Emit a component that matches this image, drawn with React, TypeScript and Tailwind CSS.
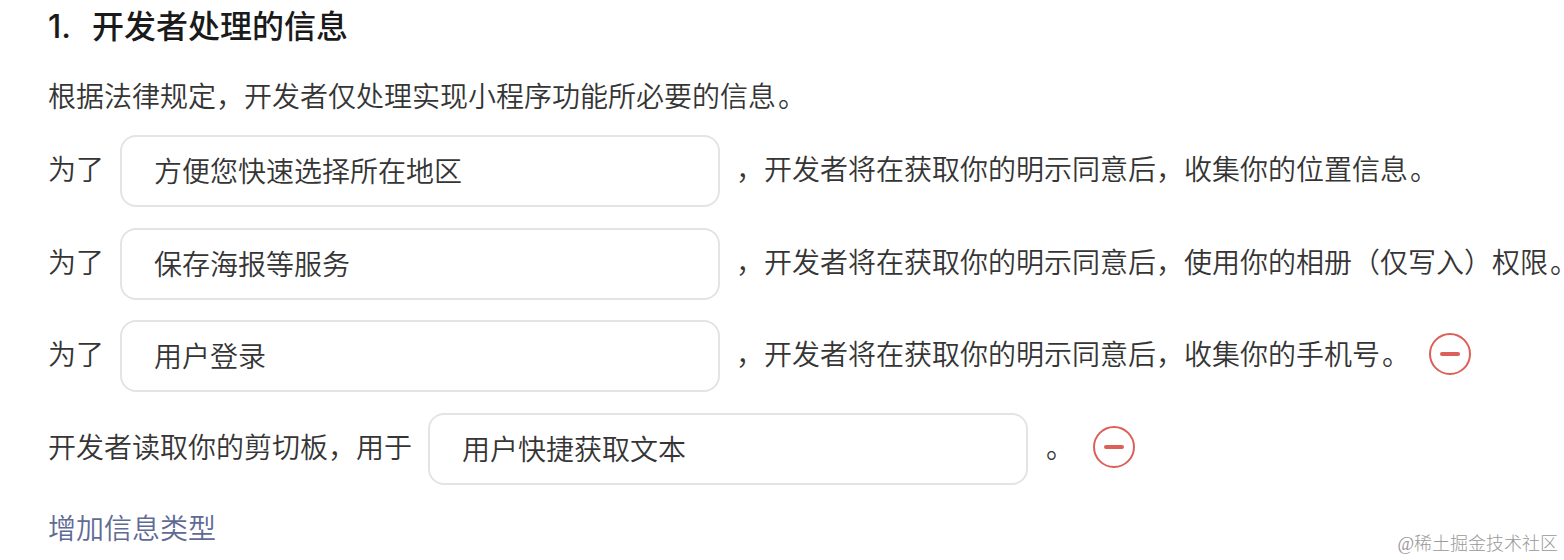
import { useState } from "react";

const rows = [
  {
    before: "为了",
    value: "方便您快速选择所在地区",
    after: "，开发者将在获取你的明示同意后，收集你的位置信息",
    removable: false,
  },
  {
    before: "为了",
    value: "保存海报等服务",
    after: "，开发者将在获取你的明示同意后，使用你的相册（仅写入）权限",
    removable: false,
  },
  {
    before: "为了",
    value: "用户登录",
    after: "，开发者将在获取你的明示同意后，收集你的手机号",
    removable: true,
  },
  {
    before: "开发者读取你的剪切板，用于",
    value: "用户快捷获取文本",
    after: "",
    removable: true,
  },
];

// half-width full stop, so the longest row still fits the page
function FullStop() {
  return <span className="ml-[2px] inline-block [font-feature-settings:'halt']">。</span>;
}

function RemoveButton({ onClick }: { onClick: () => void }) {
  return (
    <button type="button" aria-label="删除" onClick={onClick} className="mb-[4px] ml-[33px] shrink-0">
      <svg width="42" height="42" viewBox="0 0 42 42" fill="none" className="block">
        <circle cx="21" cy="21" r="20" stroke="#dc5f59" strokeWidth="2" />
        <path d="M13 21h16" stroke="#dc5f59" strokeWidth="4" strokeLinecap="round" />
      </svg>
    </button>
  );
}

export default function App() {
  const [items, setItems] = useState(rows);

  return (
    <div className="relative h-[560px] overflow-hidden bg-white pl-12 font-['Liberation_Sans','Noto_Sans_CJK_SC',sans-serif] text-[28px] font-[350] leading-10 text-[#353535]">
      <h2 className="flex h-[54px] items-center gap-[21px] text-[32px] font-medium text-[#1a1a1a]">
        <span className="font-['Inter',sans-serif]">1.</span>
        <span>开发者处理的信息</span>
      </h2>
      <p className="mt-[24px]">
        根据法律规定，开发者仅处理实现小程序功能所必要的信息
        <FullStop />
      </p>
      <div className="mt-[17px] flex flex-col gap-[20.6px]">
        {items.map((item, index) => (
          <div key={item.value} className="flex h-[72px] items-center whitespace-nowrap">
            <span>{item.before}</span>
            <input
              defaultValue={item.value}
              className="ml-4 mr-4 h-[72px] w-[600px] shrink-0 rounded-[16px] border-2 border-[#e4e4e4] px-8 pb-[2px] outline-none"
            />
            <span>
              {item.after}
              <FullStop />
            </span>
            {item.removable && (
              <RemoveButton onClick={() => setItems(items.filter((_, i) => i !== index))} />
            )}
          </div>
        ))}
      </div>
      <a href="#" className="mt-[25px] block w-fit text-[#5f6b95]">
        增加信息类型
      </a>
      <span className="absolute bottom-1 right-[6px] font-['Liberation_Serif','Noto_Sans_CJK_SC',serif] text-[18px] font-light leading-6 text-[#999999]">
        @稀土掘金技术社区
      </span>
    </div>
  );
}
